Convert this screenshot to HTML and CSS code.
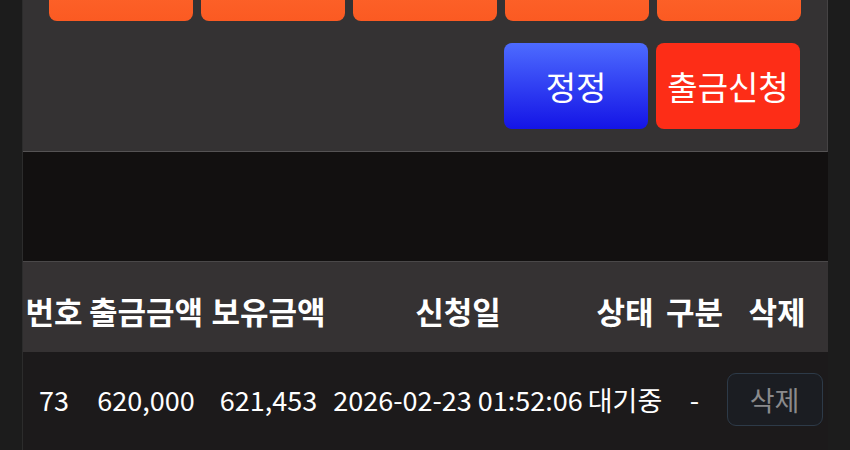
FILE: index.html
```html
<!DOCTYPE html>
<html>
<head>
<meta name="viewport" content="width=device-width, initial-scale=1">
<title>출금신청</title>
<link rel="stylesheet" href="styles.css">
</head>
<body>
<div class="wrap">
  <div class="panel">
    <div class="amounts">
      <button class="amt"></button>
      <button class="amt"></button>
      <button class="amt"></button>
      <button class="amt"></button>
      <button class="amt"></button>
    </div>
    <div class="actions">
      <button class="btn btn-fix">정정</button>
      <button class="btn btn-apply">출금신청</button>
    </div>
  </div>
  <div class="spacer"></div>
  <div class="list">
    <div class="row head">
      <div>번호</div>
      <div>출금금액</div>
      <div>보유금액</div>
      <div>신청일</div>
      <div>상태</div>
      <div>구분</div>
      <div>삭제</div>
    </div>
    <div class="row item">
      <div>73</div>
      <div>620,000</div>
      <div>621,453</div>
      <div>2026-02-23 01:52:06</div>
      <div>대기중</div>
      <div>-</div>
      <div><button class="del">삭제</button></div>
    </div>
  </div>
</div>
</body>
</html>
```

FILE: styles.css
```css
html, body {
	margin: 0;
	background: #1c1c1c;
	font-family: "Noto Sans CJK KR", "Noto Sans", sans-serif;
	color: #fff;
	overflow: hidden;
}
button {
	font-family: inherit;
	border: 0;
	color: #fff;
}
.wrap {
	margin: -60px 22px 0 22px;
	border-left: 1px solid #2c2c2c;
	background: #121010;
}
.panel {
	background: #343233;
	border-right: 1px solid #454344;
	border-bottom: 1px solid #555354;
	padding: 21px 27px 22px 26px;
}
.amounts {
	display: grid;
	grid-template-columns: repeat(5, 144px);
	gap: 8px;
}
.amt {
	height: 60px;
	border-radius: 8px;
	background: linear-gradient(to bottom, #ff6a30, #fb5a22);
}
.actions {
	display: flex;
	justify-content: flex-end;
	gap: 8px;
	margin-top: 22px;
}
.btn {
	width: 144px;
	height: 86px;
	border-radius: 8px;
	font-size: 33px;
	padding: 0;
}
.btn-fix {
	background: linear-gradient(to bottom, #4d6bff, #1414e6);
}
.btn-apply {
	background: #fd2d17;
}
.spacer {
	height: 109px;
}
.list {
	border-top: 1px solid #4a4849;
}
.row {
	display: grid;
	grid-template-columns: 62px 122px 123px 256px 78px 61px 104px;
	align-items: center;
	text-align: center;
	white-space: nowrap;
}
.head {
	height: 90px;
	background: #353233;
	font-size: 31px;
	font-weight: bold;
	padding-top: 6px;
	box-sizing: border-box;
}
.item {
	height: 110px;
	background: #1c1a1b;
	font-size: 27px;
	padding-bottom: 16px;
	box-sizing: border-box;
}
.del {
	width: 96px;
	height: 53px;
	margin-right: 5px;
	border-radius: 9px;
	border: 1px solid #2d3a48;
	background: #1b1d22;
	color: #8a8a8c;
	font-size: 27px;
	padding: 0;
}
```
